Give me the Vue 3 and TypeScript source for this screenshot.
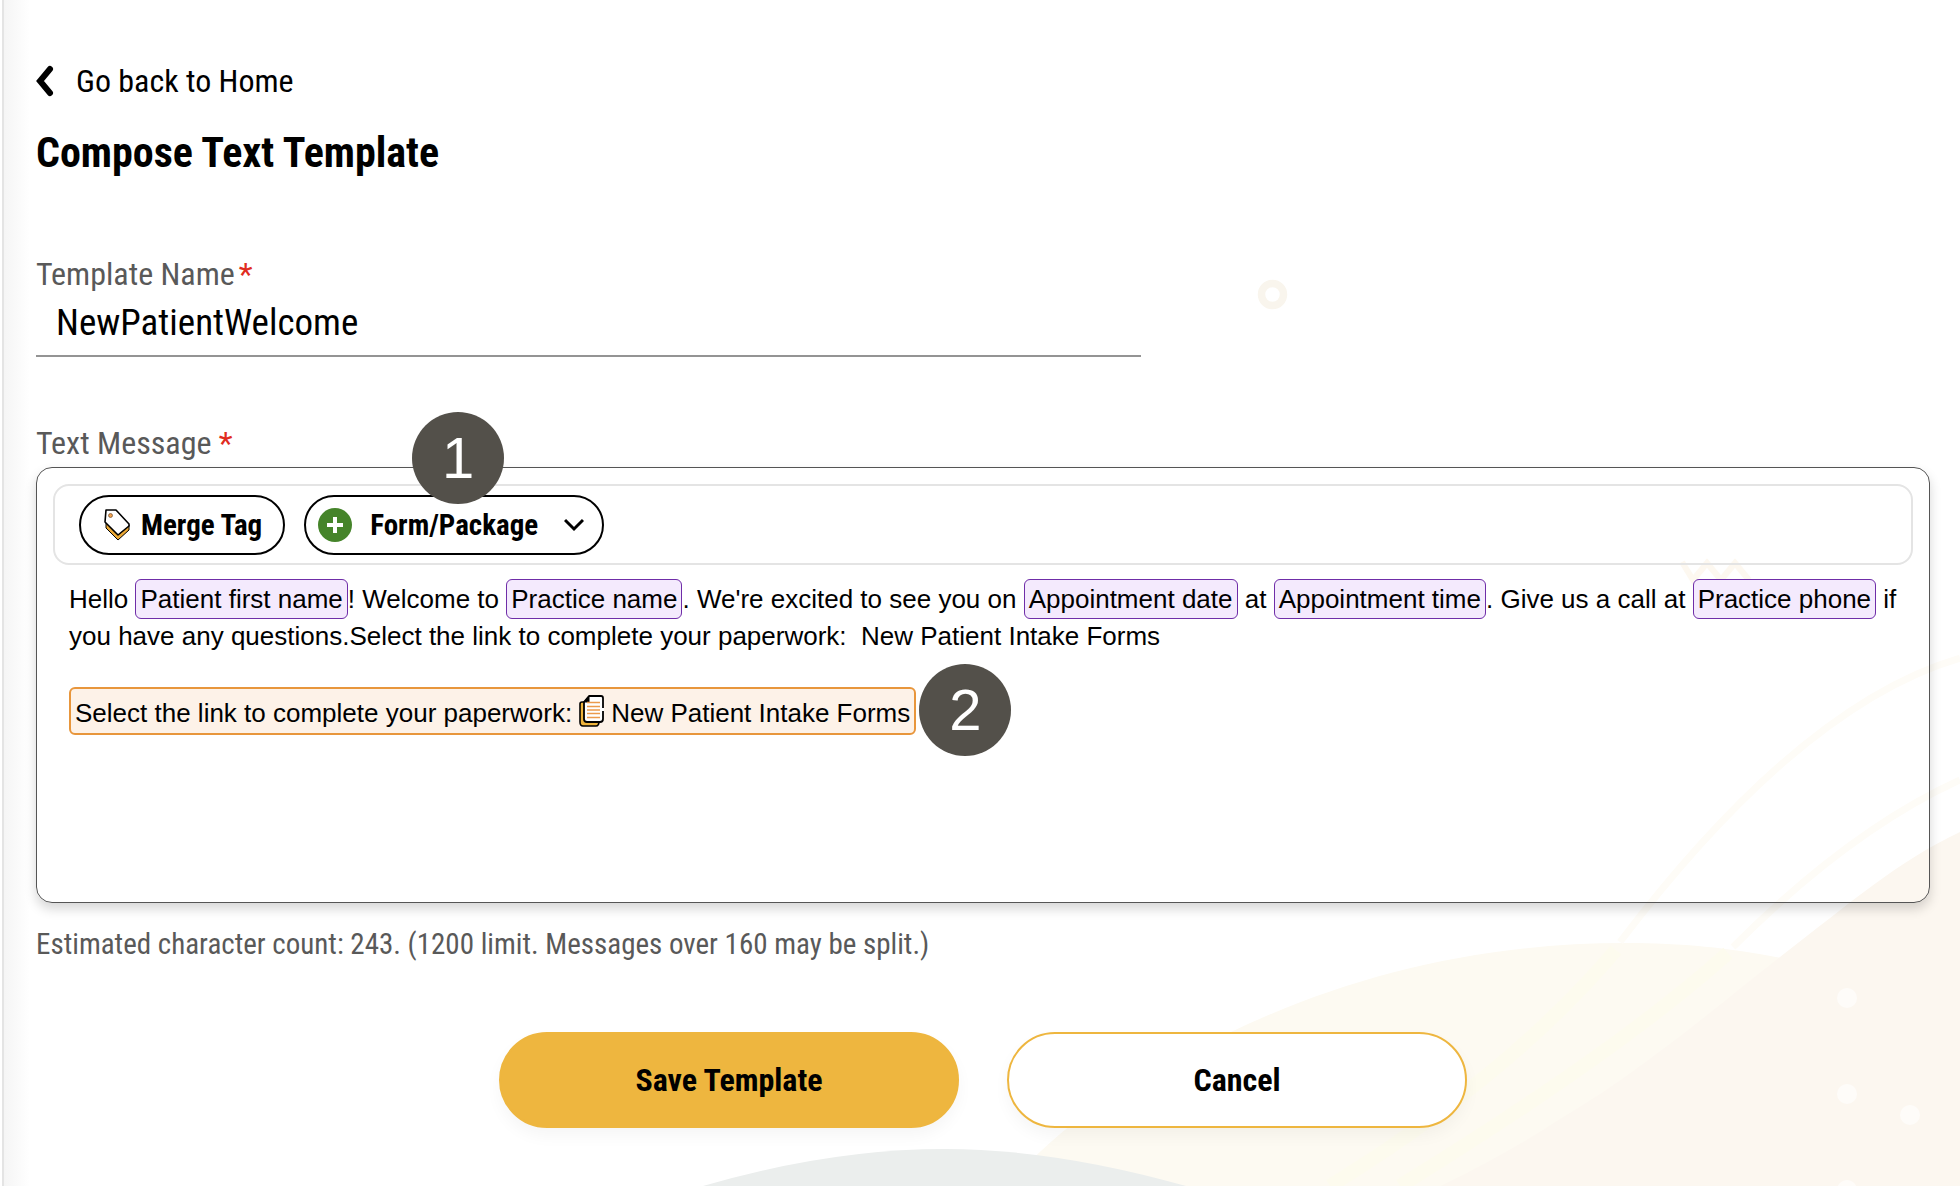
<script setup lang="ts">
import { ref } from 'vue'

interface Segment {
  text: string
  tag?: boolean
}

const templateName = ref('NewPatientWelcome')
const characterCount = 243
const characterLimit = 1200
const splitLimit = 160

const segments: Segment[] = [
  { text: 'Hello ' },
  { text: 'Patient first name', tag: true },
  { text: '! Welcome to ' },
  { text: 'Practice name', tag: true },
  { text: ". We're excited to see you on " },
  { text: 'Appointment date', tag: true },
  { text: ' at ' },
  { text: 'Appointment time', tag: true },
  { text: '. Give us a call at ' },
  { text: 'Practice phone', tag: true },
  { text: ' if you have any questions.Select the link to complete your paperwork: \u00a0New Patient Intake Forms' },
]
</script>

<template>
  <div class="page">
    <svg class="backdrop" viewBox="0 0 1960 1186" preserveAspectRatio="xMaxYMax slice" aria-hidden="true">
      <circle cx="1272.5" cy="294.5" r="11" fill="none" stroke="#f9f5ed" stroke-width="7.5" />
      <path d="M1682 562L1693 580L1707 563L1721 580L1735 563L1749 580" fill="none" stroke="#fdf8f0" stroke-width="6" />
      <path d="M1008 1186C1066 1116 1150 1068 1231 1032C1350 975 1480 943 1626 943C1690 943 1740 949 1800 962L1700 1186Z" fill="#fdfaf2" />
      <g fill="none" stroke="#fefcf7" stroke-width="7">
        <path d="M1960 658Q1800 705 1620 942" />
        <path d="M1960 780Q1850 830 1733 947" />
      </g>
      <g fill="none" stroke="#fdfbee" stroke-width="14">
        <path d="M1616 950Q1510 1075 1330 1186" />
        <path d="M1728 953Q1620 1050 1400 1186" />
      </g>
      <path d="M1960 832C1900 860 1850 903 1780 957C1710 1012 1640 1072 1560 1119Q1510 1152 1441 1186H1960Z" fill="#fcf7f0" />
      <g fill="#fefcf9">
        <circle cx="1847" cy="998" r="10" />
        <circle cx="1847" cy="1094" r="10" />
        <circle cx="1910" cy="1115" r="10" />
        <circle cx="1847" cy="1190" r="10" />
      </g>
      <path d="M703 1186Q830 1149 945 1149Q1055 1149 1186 1186Z" fill="#ebeeed" />
    </svg>

    <main class="content">
      <a class="back" href="#">
        <svg width="18" height="32" viewBox="0 0 18 32" aria-hidden="true">
          <path d="M14 4L4 16L14 28" fill="none" stroke="#000" stroke-width="6" stroke-linecap="round" stroke-linejoin="miter" />
        </svg>
        <span>Go back to Home</span>
      </a>

      <h1 class="title">Compose Text Template</h1>

      <form class="form" @submit.prevent>
        <label class="label name-label" for="template-name">Template Name<span class="required">*</span></label>
        <input id="template-name" v-model="templateName" class="name-input" type="text" required />

        <label id="message-label" class="label message-label">Text Message <span class="required">*</span></label>
        <div class="editor">
          <div class="toolbar">
            <button class="tool" type="button">
              <svg width="26" height="32" viewBox="0 0 26 32" aria-hidden="true">
                <path d="M2 14V19L14 31L25 21V16L14 26Z" fill="#eba834" stroke="#000" stroke-width="1" stroke-linejoin="round" />
                <path d="M2 1H12L25 15V17L14 26L1 13Z" fill="#fff" stroke="#000" stroke-width="1.6" stroke-linejoin="round" />
                <circle cx="6.5" cy="6.5" r="2" fill="#f0a050" stroke="#5a3a1a" stroke-width="0.6" />
              </svg>
              Merge Tag
            </button>
            <div class="tool-anchor">
              <button class="tool package" type="button" aria-haspopup="menu">
                <svg width="34" height="34" viewBox="0 0 34 34" aria-hidden="true">
                  <circle cx="17" cy="17" r="17" fill="#45842a" />
                  <path d="M17 9V25M9 17H25" stroke="#fff" stroke-width="4" />
                </svg>
                <span class="package-text">Form/Package</span>
                <svg width="20" height="14" viewBox="0 0 20 14" aria-hidden="true">
                  <path d="M1 2L10 11L19 2" fill="none" stroke="#000" stroke-width="3" />
                </svg>
              </button>
              <span class="step step-one">1</span>
            </div>
          </div>

          <div class="message" contenteditable="true" role="textbox" aria-multiline="true" aria-labelledby="message-label" spellcheck="false">
            <p class="text"><span v-for="(s, i) in segments" :key="i" :class="{ merge: s.tag }">{{ s.text }}</span></p>
            <div class="link-block">
              <span>Select the link to complete your paperwork:</span>
              <svg width="25" height="32" viewBox="0 0 25 32" aria-hidden="true">
                <path d="M5 7H3Q1 7 1 9V27Q1 31 4 31H17Q20 31 20 26" fill="#eeb33b" stroke="#000" stroke-width="1.6" />
                <path d="M10 1H22Q24 1 24 3V24Q24 27 21 27H8Q5 27 5 24V7Z" fill="#fff" stroke="#000" stroke-width="1.8" stroke-linejoin="round" />
                <path d="M10 1V7H5Z" fill="#000" stroke="#000" />
                <path d="M24 13V16" stroke="#fff" stroke-width="3" />
                <path d="M8 7.5H21M8 11.5H21M8 15H21M8 18.5H21M8 22.5H21" stroke="#eb9a4c" stroke-width="1.4" />
              </svg>
              <span>New Patient Intake Forms</span>
              <span class="step step-two">2</span>
            </div>
          </div>
        </div>

        <p class="count">
          Estimated character count: {{ characterCount }}. ({{ characterLimit }} limit. Messages over {{ splitLimit }} may be split.)
        </p>

        <div class="actions">
          <button class="action save" type="submit">Save Template</button>
          <button class="action cancel" type="button">Cancel</button>
        </div>
      </form>
    </main>
  </div>
</template>

<style>
body {
  background: #fff;
}
</style>

<style scoped>
.page,
.page * {
  box-sizing: border-box;
}

.page {
  position: relative;
  min-height: 100vh;
  margin-left: 2px;
  padding: 61px 30px 24px 32px;
  overflow: hidden;
  border-left: 2px solid #e4e4e4;
  background: linear-gradient(to right, #f5f5f5, #fff 26px);
  color: #000;
  font-family: "Roboto Condensed", Roboto, sans-serif;
}

.backdrop {
  position: absolute;
  right: 0;
  bottom: 0;
  width: 100vw;
  height: 100%;
}

.content {
  position: relative;
}

.back {
  display: inline-flex;
  align-items: center;
  gap: 22px;
  color: #000;
  font-size: 32px;
  line-height: 40px;
  text-decoration: none;
}

.title {
  margin: 28px 0 0;
  font-size: 42px;
  font-weight: 700;
  line-height: 48px;
}

.form {
  margin-top: 77px;
}

.label {
  display: block;
  color: #595959;
  font-size: 32px;
  line-height: 40px;
}

.required {
  color: #e02b20;
}

.name-label .required {
  margin-left: 4px;
}

.name-input {
  display: block;
  width: 58.33%;
  height: 63px;
  padding: 6px 20px 11px;
  border: 0;
  border-bottom: 2px solid #949494;
  border-radius: 0;
  outline: 0;
  background: transparent;
  color: #000;
  font-family: inherit;
  font-size: 37px;
  line-height: 44px;
}

.message-label {
  margin-top: 66px;
}

.editor {
  min-height: 436px;
  margin-top: 4px;
  padding: 16px;
  border: 1px solid #555;
  border-radius: 16px;
  box-shadow: 0 6px 12px rgba(0, 0, 0, 0.16);
}

.toolbar {
  display: flex;
  gap: 19px;
  padding: 9px 24px 8px;
  border: 2px solid #e4e4e4;
  border-radius: 16px;
}

.tool {
  display: flex;
  align-items: center;
  gap: 11px;
  height: 60px;
  padding: 0 21px 0 23px;
  border: 2px solid #000;
  border-radius: 30px;
  background: #fff;
  color: #000;
  font-family: inherit;
  font-size: 29px;
  font-weight: 700;
  line-height: 36px;
}

.tool-anchor {
  position: relative;
}

.package {
  gap: 18px;
  padding: 0 18px 0 12px;
}

.package-text {
  margin-right: 8px;
}

.step {
  position: absolute;
  display: flex;
  align-items: center;
  justify-content: center;
  width: 92px;
  height: 92px;
  border-radius: 50%;
  background: #53504a;
  color: #fff;
  font-family: "Liberation Sans", Arial, sans-serif;
  font-size: 58px;
  line-height: 64px;
}

.step-one {
  left: 108px;
  bottom: 51px;
}

.step-two {
  left: 100%;
  top: -25px;
  margin-left: 5px;
}

.message {
  padding: 16px 8px 0 16px;
  outline: 0;
  font-family: "Liberation Sans", Arial, sans-serif;
  font-size: 26px;
  line-height: 37px;
}

.text {
  margin: 0;
}

.merge {
  padding: 4px;
  border: 1px solid #6f2da8;
  border-radius: 6px;
  background: #f4eafd;
}

.link-block {
  position: relative;
  display: inline-flex;
  align-items: center;
  gap: 7px;
  margin-top: 32px;
  padding: 6px 4px 1px;
  border: 2px solid #e8963c;
  border-radius: 6px;
  background: #fdf2e8;
}

.link-block svg {
  margin-bottom: 5px;
}

.count {
  margin: 23px 0 0;
  color: #595959;
  font-size: 29px;
  line-height: 36px;
}

.actions {
  display: flex;
  justify-content: center;
  gap: 48px;
  margin-top: 70px;
}

.action {
  flex: 0 1 460px;
  height: 96px;
  border: 2px solid #eeb63f;
  border-radius: 48px;
  box-shadow: 0 8px 16px rgba(0, 0, 0, 0.04);
  color: #000;
  font-family: inherit;
  font-size: 32px;
  font-weight: 700;
  line-height: 40px;
}

.save {
  background: #eeb63f;
}

.cancel {
  background: #fff;
}
</style>
